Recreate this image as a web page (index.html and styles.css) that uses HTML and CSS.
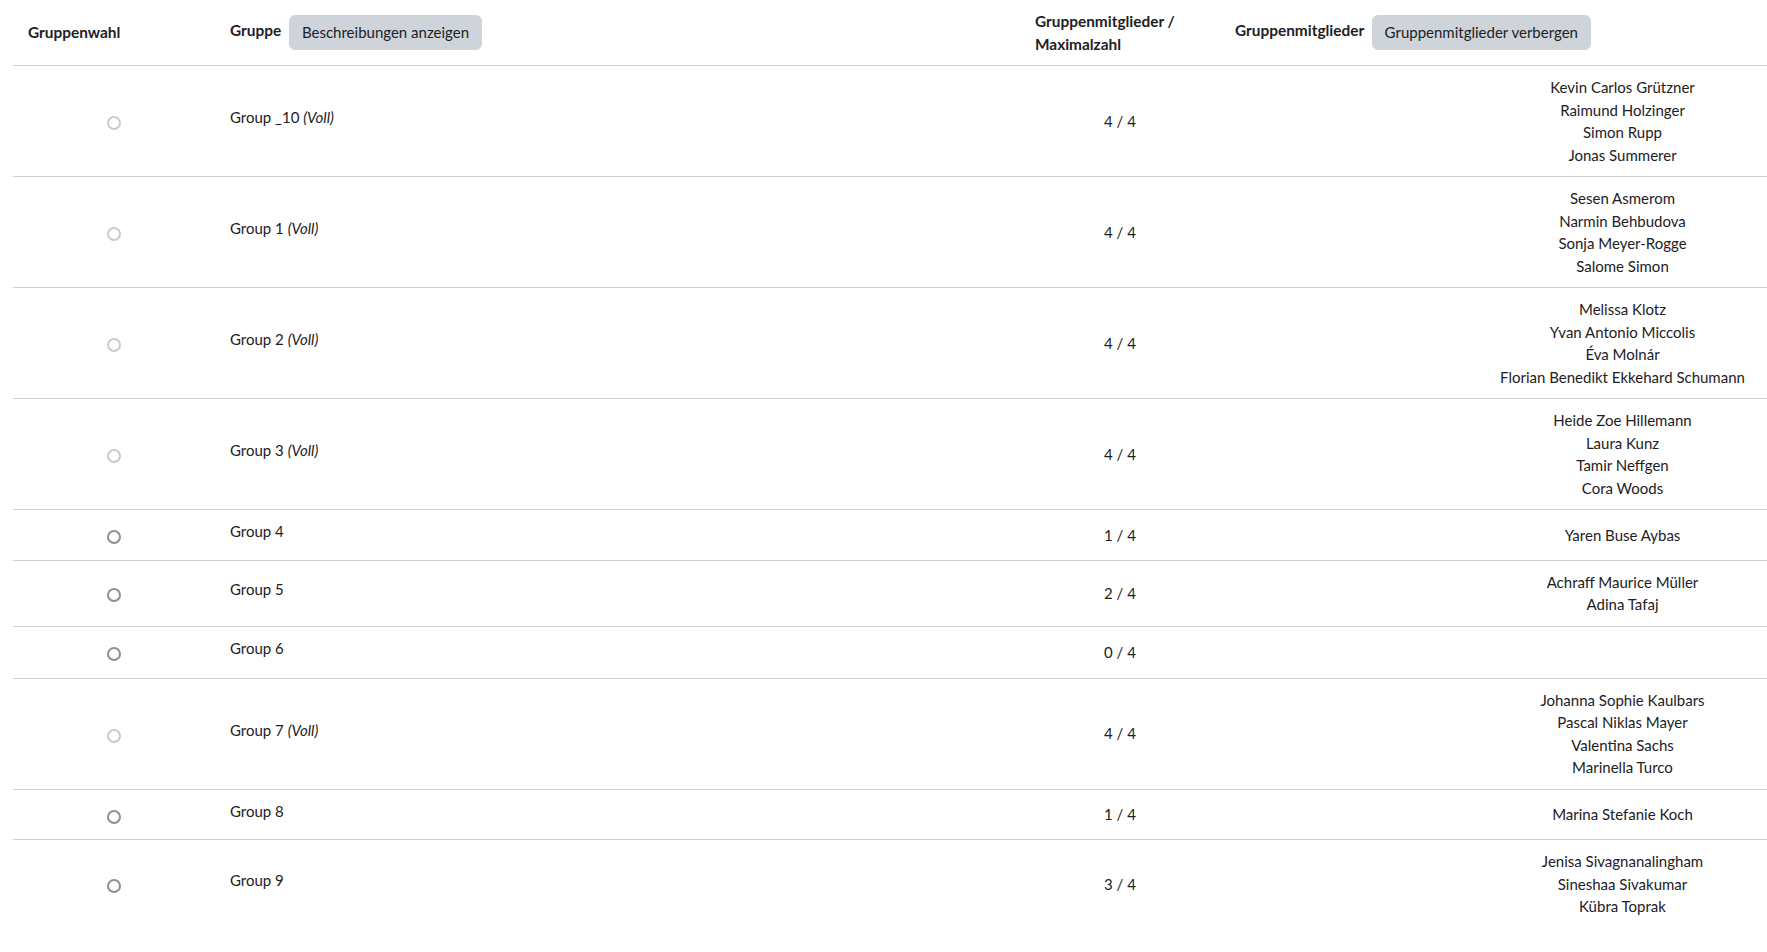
FILE: index.html
```html
<!DOCTYPE html>
<html lang="de">
<head>
<meta charset="utf-8">
<title>Gruppenwahl</title>
<link rel="stylesheet" href="styles.css">
</head>
<body>
<div class="wrap">
<table class="groups">
  <colgroup>
    <col class="c-choice"><col class="c-group"><col class="c-count"><col class="c-members">
  </colgroup>
  <thead>
    <tr>
      <th class="h-choice">Gruppenwahl</th>
      <th>Gruppe <button class="btn">Beschreibungen anzeigen</button></th>
      <th>Gruppenmitglieder / Maximalzahl</th>
      <th>Gruppenmitglieder <button class="btn">Gruppenmitglieder verbergen</button></th>
    </tr>
  </thead>
  <tbody>
    <tr>
      <td class="choice"><span class="radio disabled"></span></td>
      <td class="gname"><div>Group _10 <em>(Voll)</em></div></td>
      <td class="count">4 / 4</td>
      <td class="members"><div>Kevin Carlos Grützner</div><div>Raimund Holzinger</div><div>Simon Rupp</div><div>Jonas Summerer</div></td>
    </tr>
    <tr>
      <td class="choice"><span class="radio disabled"></span></td>
      <td class="gname"><div>Group 1 <em>(Voll)</em></div></td>
      <td class="count">4 / 4</td>
      <td class="members"><div>Sesen Asmerom</div><div>Narmin Behbudova</div><div>Sonja Meyer-Rogge</div><div>Salome Simon</div></td>
    </tr>
    <tr>
      <td class="choice"><span class="radio disabled"></span></td>
      <td class="gname"><div>Group 2 <em>(Voll)</em></div></td>
      <td class="count">4 / 4</td>
      <td class="members"><div>Melissa Klotz</div><div>Yvan Antonio Miccolis</div><div>Éva Molnár</div><div>Florian Benedikt Ekkehard Schumann</div></td>
    </tr>
    <tr>
      <td class="choice"><span class="radio disabled"></span></td>
      <td class="gname"><div>Group 3 <em>(Voll)</em></div></td>
      <td class="count">4 / 4</td>
      <td class="members"><div>Heide Zoe Hillemann</div><div>Laura Kunz</div><div>Tamir Neffgen</div><div>Cora Woods</div></td>
    </tr>
    <tr>
      <td class="choice"><span class="radio"></span></td>
      <td class="gname"><div>Group 4</div></td>
      <td class="count">1 / 4</td>
      <td class="members"><div>Yaren Buse Aybas</div></td>
    </tr>
    <tr>
      <td class="choice"><span class="radio"></span></td>
      <td class="gname"><div>Group 5</div></td>
      <td class="count">2 / 4</td>
      <td class="members"><div>Achraff Maurice Müller</div><div>Adina Tafaj</div></td>
    </tr>
    <tr>
      <td class="choice"><span class="radio"></span></td>
      <td class="gname"><div>Group 6</div></td>
      <td class="count">0 / 4</td>
      <td class="members"><div class="empty"></div></td>
    </tr>
    <tr>
      <td class="choice"><span class="radio disabled"></span></td>
      <td class="gname"><div>Group 7 <em>(Voll)</em></div></td>
      <td class="count">4 / 4</td>
      <td class="members"><div>Johanna Sophie Kaulbars</div><div>Pascal Niklas Mayer</div><div>Valentina Sachs</div><div>Marinella Turco</div></td>
    </tr>
    <tr>
      <td class="choice"><span class="radio"></span></td>
      <td class="gname"><div>Group 8</div></td>
      <td class="count">1 / 4</td>
      <td class="members"><div>Marina Stefanie Koch</div></td>
    </tr>
    <tr>
      <td class="choice"><span class="radio"></span></td>
      <td class="gname"><div>Group 9</div></td>
      <td class="count">3 / 4</td>
      <td class="members"><div>Jenisa Sivagnanalingham</div><div>Sineshaa Sivakumar</div><div>Kübra Toprak</div></td>
    </tr>
  </tbody>
</table>
</div>
</body>
</html>
```

FILE: styles.css
```css
html, body {
  margin: 0;
  padding: 0;
  background: #fff;
  overflow: hidden;
}
body {
  font-family: Lato, "Open Sans", "Liberation Sans", sans-serif;
  font-size: 15px;
  line-height: 1.5;
  color: #1d2125;
}
.wrap {
  padding-left: 13px;
  width: 2100px;
}
.groups {
  width: 2012px;
  border-collapse: collapse;
  table-layout: fixed;
}
.c-choice { width: 202px; }
.c-group { width: 805px; }
.c-count { width: 200px; }
.c-members { width: 805px; }

.groups th {
  text-align: left;
  font-weight: 700;
  font-size: 15.4px;
  line-height: 22.5px;
  height: 44px;
  box-sizing: content-box;
  padding: 10px 15px;
  vertical-align: middle;
  border-bottom: 1px solid #cfd0d2;
}
.groups td {
  padding: 10px 15px;
  vertical-align: middle;
  border-top: 1px solid #cfd0d2;
}
.groups tbody tr:first-child td { border-top: none; }

.btn {
  font-family: inherit;
  font-size: 15px;
  font-weight: 400;
  color: #1d2125;
  background: #ced4da;
  border: 1px solid #ced4da;
  border-radius: 6px;
  padding: 5px 12px;
  margin-left: 4px;
  line-height: 22.5px;
  vertical-align: middle;
  cursor: pointer;
}

.choice { text-align: center; }
.radio {
  display: inline-block;
  width: 14px;
  height: 14px;
  box-sizing: border-box;
  border: 2px solid #8e8f99;
  border-radius: 50%;
  margin-top: 1px;
  vertical-align: middle;
}
.radio.disabled {
  border-color: #c9cacf;
}
.gname div { padding-bottom: 7px; }
.gname em { font-style: italic; }
.count { text-align: center; }
.members { text-align: center; }
.members .empty { height: 31px; }
```
